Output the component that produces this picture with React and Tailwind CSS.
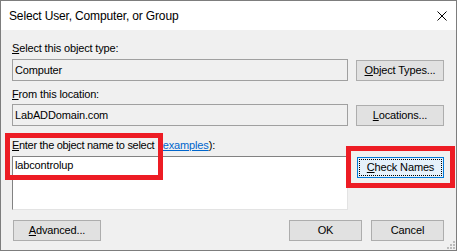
import React from 'react';

const font = "font-['Liberation_Sans',Arial,sans-serif]";

function Btn({ children, className = '' }) {
  return (
    <div
      className={`flex h-[21px] items-center justify-center border border-[#adadad] bg-[#e1e1e1] text-[11px] leading-[13px] text-black ${className}`}
    >
      {children}
    </div>
  );
}

function Field({ value }) {
  return (
    <div className="flex h-[22px] w-[336px] items-center border border-[#a0a0a0] bg-[#f0f0f0] pl-[2px] text-[11px] leading-[13px] text-black">
      {value}
    </div>
  );
}

export default function App() {
  return (
    <div className={`relative flex h-[251px] w-[457px] flex-col border border-[#7d7d7d] bg-[#f0f0f0] ${font}`}>
      {/* title bar */}
      <div className="flex h-[29px] items-center justify-between bg-white pl-[8px] pr-[10px]">
        <span className="pt-[1px] text-[12px] leading-[14px] tracking-[-0.15px] text-black">
          Select User, Computer, or Group
        </span>
        <svg width="10" height="10" viewBox="0 0 10 10" className="mr-[-1px] mt-[1px]">
          <path d="M0.5 0.5 L9.5 9.5 M9.5 0.5 L0.5 9.5" stroke="#000" strokeWidth="1" fill="none" />
        </svg>
      </div>

      <div className="flex flex-col pl-[11px] pr-[12px] pt-[12px] text-[11px] leading-[13px] tracking-[-0.15px] text-black">
        <div>
          <span className="underline">S</span>elect this object type:
        </div>
        <div className="mt-[4px] flex items-start">
          <Field value="Computer" />
          <Btn className="ml-[8px] mt-[1px] w-[88px]">
            <span><span className="underline">O</span>bject Types...</span>
          </Btn>
        </div>

        <div className="mt-[7px]">
          <span className="underline">F</span>rom this location:
        </div>
        <div className="mt-[3px] flex items-start">
          <Field value="LabADDomain.com" />
          <Btn className="ml-[8px] mt-[1px] w-[88px]">
            <span><span className="underline">L</span>ocations...</span>
          </Btn>
        </div>

        <div className="mt-[13px]">
          <span className="tracking-[-0.3px]">
            <span className="underline">E</span>nter the object name to select
          </span>{' '}
          <span className="pl-[1px]">(</span>
          <span className="pl-[1px] text-[#0066cc] underline">examples</span>):
        </div>
        <div className="mt-[4px] flex items-start">
          <div className="h-[54px] w-[336px] border border-b-[#e3e3e3] border-l-[#828282] border-r-[#e3e3e3] border-t-[#828282] bg-white pl-[2px] pt-[2px]">
            labcontrolup
          </div>
          <div className="ml-[9px] mt-[1px] flex h-[21px] w-[87px] items-center justify-center border border-[#0078d7] bg-[#e5f1fb] p-[1px]">
            <div className="flex h-full w-full items-center justify-center border border-dotted border-black">
              <span><span className="underline">C</span>heck Names</span>
            </div>
          </div>
        </div>

        <div className="mt-[10px] flex items-start">
          <Btn className="ml-[1px] w-[88px]">
            <span><span className="underline">A</span>dvanced...</span>
          </Btn>
          <div className="flex-1" />
          <Btn className="w-[73px]">OK</Btn>
          <Btn className="ml-[9px] w-[73px]">Cancel</Btn>
        </div>
      </div>

      {/* size grip */}
      <svg width="10" height="10" viewBox="0 0 10 10" className="absolute bottom-[0px] right-[0px]">
        <rect x="7" y="1" width="2" height="2" fill="#bcbcbc" />
        <rect x="4" y="4" width="2" height="2" fill="#bcbcbc" />
        <rect x="7" y="4" width="2" height="2" fill="#bcbcbc" />
        <rect x="1" y="7" width="2" height="2" fill="#bcbcbc" />
        <rect x="4" y="7" width="2" height="2" fill="#bcbcbc" />
        <rect x="7" y="7" width="2" height="2" fill="#bcbcbc" />
      </svg>

      {/* red highlight boxes */}
      <div className="absolute left-[4px] top-[132px] h-[47px] w-[158px] border-[5px] border-[#ed1c24]" />
      <div className="absolute left-[345px] top-[145px] h-[42px] w-[109px] border-[5px] border-[#ed1c24]" />
    </div>
  );
}
